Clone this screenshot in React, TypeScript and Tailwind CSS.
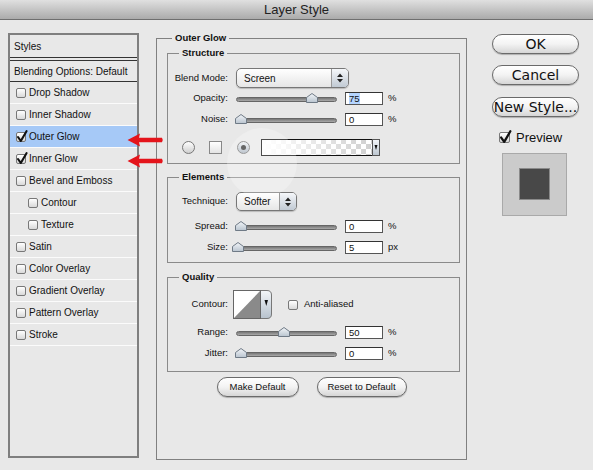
import React from 'react';

const sans = { fontFamily: '"Liberation Sans", Arial, sans-serif' };
const wide = { fontFamily: '"DejaVu Sans", "Liberation Sans", sans-serif' };

function Check({ checked, size = 10 }: { checked?: boolean; size?: number }) {
  return (
    <span
      className="relative inline-block shrink-0 rounded-[2px] border border-[#787878] bg-gradient-to-b from-white to-[#d9d9d9]"
      style={{ width: size, height: size }}
    >
      {checked && (
        <svg className="absolute -top-[3px] left-[-1px]" width={size + 2} height={size + 3} viewBox="0 0 12 13">
          <path d="M2 7 L4.8 11 L10.5 1.2" fill="none" stroke="#111" strokeWidth="2.1" strokeLinecap="round" strokeLinejoin="round" />
        </svg>
      )}
    </span>
  );
}

function Slider({ pct }: { pct: number }) {
  return (
    <div className="relative h-[11px] w-[101px]">
      <div className="absolute left-0 right-0 top-[4px] h-[5px] rounded-full border border-[#666] bg-gradient-to-b from-[#777] to-[#aaa]" />
      <svg
        className="absolute top-0"
        style={{ left: `${pct}%`, marginLeft: pct === 0 ? -1 : -6 }}
        width="12"
        height="10"
        viewBox="0 0 12 10"
      >
        <defs>
          <linearGradient id="thumb" x1="0" y1="0" x2="0" y2="1">
            <stop offset="0" stopColor="#f3f6f9" />
            <stop offset="1" stopColor="#b9c4cf" />
          </linearGradient>
        </defs>
        <path d="M0.5 9.5 V4.5 L6 0.5 L11.5 4.5 V9.5 Z" fill="url(#thumb)" stroke="#6f7a86" />
      </svg>
    </div>
  );
}

function Field({ value, selected }: { value: string; selected?: boolean }) {
  return (
    <div className="ml-[8px] flex h-[13px] w-[38px] items-center border border-[#555] border-t-[#333] bg-white pl-[3px] text-[9.5px] leading-[11px]">
      <span className={selected ? 'bg-[#b5d5ff]' : ''}>{value}</span>
    </div>
  );
}

function SliderRow({ label, pct, value, unit, selected }: { label: string; pct: number; value: string; unit: string; selected?: boolean }) {
  return (
    <div className="flex h-[14px] items-center">
      <span className="w-[60px] text-right">{label}</span>
      <div className="ml-[8px]">
        <Slider pct={pct} />
      </div>
      <Field value={value} selected={selected} />
      <span className="ml-[5px]">{unit}</span>
    </div>
  );
}

function UpDown() {
  return (
    <svg width="6" height="10" viewBox="0 0 6 10">
      <path d="M0 4 L3 0.5 L6 4 Z M0 6 L3 9.5 L6 6 Z" fill="#222" />
    </svg>
  );
}

function Select({ label, width, height }: { label: string; width: number; height: number }) {
  return (
    <div
      className="ml-[8px] flex items-stretch overflow-hidden rounded-[5px] border border-[#777] bg-gradient-to-b from-white to-[#e6e6e6] shadow-[0_1px_1px_rgba(0,0,0,0.2)]"
      style={{ width, height }}
    >
      <span className="flex flex-1 items-center pl-[7px] text-[10px]">{label}</span>
      <span className="flex w-[17px] items-center justify-center border-l border-[#999] bg-gradient-to-b from-[#f5f7fa] to-[#c1cad4]">
        <UpDown />
      </span>
    </div>
  );
}

function Radio({ on }: { on?: boolean }) {
  return (
    <span
      className={`flex h-[13px] w-[13px] items-center justify-center rounded-full border border-[#777] bg-gradient-to-b ${on ? 'from-[#eef1f4] to-[#aab4bf]' : 'from-white to-[#cfcfcf]'}`}
    >
      {on && <span className="h-[5px] w-[5px] rounded-full bg-[#333]" />}
    </span>
  );
}

function Swatch() {
  return (
    <svg width="125" height="17" viewBox="0 0 125 17">
      <defs>
        <pattern id="chk" width="10" height="10" patternUnits="userSpaceOnUse">
          <rect width="10" height="10" fill="#fff" />
          <rect width="5" height="5" fill="#cfcfcf" />
          <rect x="5" y="5" width="5" height="5" fill="#cfcfcf" />
        </pattern>
        <linearGradient id="fade" x1="0" y1="0" x2="1" y2="0">
          <stop offset="0" stopColor="#fff" stopOpacity="1" />
          <stop offset="1" stopColor="#fff" stopOpacity="0" />
        </linearGradient>
        <linearGradient id="seg" x1="0" y1="0" x2="0" y2="1">
          <stop offset="0" stopColor="#f4f6f9" />
          <stop offset="1" stopColor="#bcc6d0" />
        </linearGradient>
      </defs>
      <rect x="0.5" y="0.5" width="111" height="16" fill="url(#chk)" />
      <rect x="0.5" y="0.5" width="111" height="16" fill="url(#fade)" />
      <rect x="0.5" y="0.5" width="111" height="16" fill="none" stroke="#111" />
      <rect x="111.5" y="0.5" width="7" height="16" fill="url(#seg)" stroke="#555" />
      <path d="M113.5 6 L116.5 6 L115 11 Z" fill="#111" />
    </svg>
  );
}

function ContourPicker() {
  return (
    <svg width="39" height="29" viewBox="0 0 39 29">
      <defs>
        <linearGradient id="cseg" x1="0" y1="0" x2="0" y2="1">
          <stop offset="0" stopColor="#f3f6f9" />
          <stop offset="1" stopColor="#b7c2cd" />
        </linearGradient>
      </defs>
      <rect x="0.5" y="0.5" width="27" height="28" fill="#fff" />
      <path d="M0.5 28.5 L27.5 0.5 L27.5 28.5 Z" fill="#8a8a8a" />
      <path d="M27.5 0.5 H34 Q38.5 0.5 38.5 5 V24 Q38.5 28.5 34 28.5 H27.5 Z" fill="url(#cseg)" stroke="#777" />
      <rect x="0.5" y="0.5" width="27" height="28" fill="none" stroke="#666" />
      <path d="M31.5 10 L35 10 L33.3 16 Z" fill="#111" />
    </svg>
  );
}

function Pill({ label, width, className = '' }: { label: string; width: number; className?: string }) {
  return (
    <div
      className={`flex h-[20px] items-center justify-center rounded-full border border-[#6a6a6a] bg-gradient-to-b from-white via-[#f3f3f3] to-[#d6d6d6] shadow-[0_1px_1px_rgba(0,0,0,0.25)] ${className}`}
      style={{ width }}
    >
      {label}
    </div>
  );
}

function Group({ title, className = '', children }: { title: string; className?: string; children: React.ReactNode }) {
  return (
    <fieldset className={`border border-[#8a8a8a] ${className}`}>
      <legend className="ml-[11px] px-[3px] text-[9.5px] font-bold leading-[12px]">{title}</legend>
      {children}
    </fieldset>
  );
}

const styleRows: { label: string; checked?: boolean; active?: boolean; indent?: boolean }[] = [
  { label: 'Drop Shadow' },
  { label: 'Inner Shadow' },
  { label: 'Outer Glow', checked: true, active: true },
  { label: 'Inner Glow', checked: true },
  { label: 'Bevel and Emboss' },
  { label: 'Contour', indent: true },
  { label: 'Texture', indent: true },
  { label: 'Satin' },
  { label: 'Color Overlay' },
  { label: 'Gradient Overlay' },
  { label: 'Pattern Overlay' },
  { label: 'Stroke' },
];

function Arrow({ top }: { top: number }) {
  return (
    <svg className="absolute left-[127px]" style={{ top }} width="37" height="14" viewBox="0 0 37 14">
      <path d="M0.5 7 L13 0.5 L12 4.8 L35 4.8 Q36.5 7 35 9.2 L12 9.2 L13 13.5 Z" fill="#e4141b" />
    </svg>
  );
}

export default function App() {
  return (
    <div className="relative h-[470px] w-[593px] overflow-hidden bg-[#e8e8e8] text-[#111]" style={sans}>
      {/* title bar */}
      <div className="flex h-[20px] items-center justify-center border-b border-[#6f6f6f] bg-gradient-to-b from-[#e0e0e0] to-[#ababab] text-[13px] text-[#222]">
        Layer Style
      </div>

      <div className="flex items-start pl-[8px]">
        {/* styles list */}
        <div className="mt-[13px] h-[425px] w-[131px] border-2 border-[#7f7f7f] text-[10px]">
          <div className="flex h-[23px] items-center border-b border-[#333] pl-[4px]">Styles</div>
          <div className="mt-[2px] flex h-[22px] items-center border-y border-[#333] pl-[4px]">Blending Options: Default</div>
          {styleRows.map((r) => (
            <div
              key={r.label}
              className={`flex h-[22px] items-center gap-[3px] border-b border-[#fbfbfb] ${r.indent ? 'pl-[18px]' : 'pl-[6px]'} ${r.active ? 'bg-[#a6c9f7]' : ''}`}
            >
              <Check checked={r.checked} />
              <span>{r.label}</span>
            </div>
          ))}
        </div>

        {/* main settings */}
        <fieldset className="ml-[17px] mt-[12px] h-[428px] w-[311px] border border-[#808080] text-[9.5px]">
          <legend className="ml-[15px] px-[3px] text-[9.5px] font-bold leading-[12px]">Outer Glow</legend>

          <Group title="Structure" className="ml-[10px] mt-[3px] h-[117px] w-[293px]">
            <div className="mt-[9px] flex h-[20px] items-center">
              <span className="w-[60px] text-right">Blend Mode:</span>
              <Select label="Screen" width={113} height={20} />
            </div>
            <div className="mt-[3px]">
              <SliderRow label="Opacity:" pct={75} value="75" unit="%" selected />
            </div>
            <div className="mt-[7px]">
              <SliderRow label="Noise:" pct={0} value="0" unit="%" />
            </div>
            <div className="mt-[13px] flex h-[17px] items-center pl-[14px]">
              <Radio />
              <span className="ml-[14px] h-[13px] w-[13px] border border-[#888] bg-gradient-to-b from-white to-[#e4e4e4]" />
              <span className="ml-[15px]">
                <Radio on />
              </span>
              <span className="ml-[11px] flex">
                <Swatch />
              </span>
            </div>
          </Group>

          <Group title="Elements" className="ml-[10px] mt-[7px] h-[92px] w-[293px]">
            <div className="mt-[9px] flex h-[19px] items-center">
              <span className="w-[60px] text-right">Technique:</span>
              <Select label="Softer" width={61} height={19} />
            </div>
            <div className="mt-[8px]">
              <SliderRow label="Spread:" pct={0} value="0" unit="%" />
            </div>
            <div className="mt-[7px]">
              <SliderRow label="Size:" pct={2} value="5" unit="px" />
            </div>
          </Group>

          <Group title="Quality" className="ml-[10px] mt-[8px] h-[101px] w-[293px]">
            <div className="mt-[7px] flex h-[29px] items-center">
              <span className="w-[60px] text-right">Contour:</span>
              <span className="ml-[5px] flex">
                <ContourPicker />
              </span>
              <span className="ml-[16px] flex">
                <Check />
              </span>
              <span className="ml-[6px]">Anti-aliased</span>
            </div>
            <div className="mt-[6px]">
              <SliderRow label="Range:" pct={48} value="50" unit="%" />
            </div>
            <div className="mt-[7px]">
              <SliderRow label="Jitter:" pct={0} value="0" unit="%" />
            </div>
          </Group>

          <div className="mt-[5px] flex justify-center gap-[18px] text-[9.5px]">
            <Pill label="Make Default" width={82} />
            <Pill label="Reset to Default" width={90} />
          </div>
        </fieldset>

        {/* buttons column */}
        <div className="ml-[25px] mt-[14px] flex w-[87px] flex-col text-[14px]" style={wide}>
          <Pill label="OK" width={87} />
          <Pill label="Cancel" width={87} className="mt-[11px]" />
          <Pill label="New Style..." width={87} className="mt-[12px]" />
          <div className="ml-[7px] mt-[11px] flex items-center gap-[6px] text-[13px]" style={sans}>
            <Check checked size={11} />
            <span>Preview</span>
          </div>
          <div className="ml-[10px] mt-[5px] flex h-[63px] w-[65px] items-center justify-center border border-[#a9a9a9] bg-[#cbcbcb]">
            <div className="h-[32px] w-[31px] border border-[#8a8a8a] bg-[#484848]" />
          </div>
        </div>
      </div>

      {/* faint lens glare over the dialog */}
      <div className="pointer-events-none absolute left-[227px] top-[128px] h-[70px] w-[70px] rounded-full bg-white/25" />

      <Arrow top={133} />
      <Arrow top={154} />
    </div>
  );
}
